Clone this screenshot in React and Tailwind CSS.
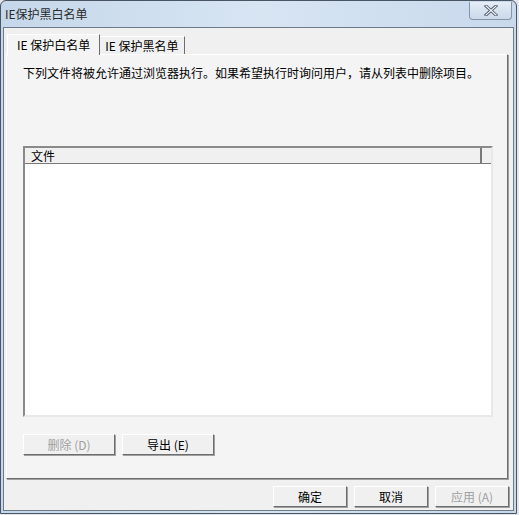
import React from "react";

const font = { fontFamily: '"Noto Sans CJK SC", "Liberation Sans", sans-serif' };

function Btn({ children, disabled, className = "" }) {
  return (
    <button
      type="button"
      className={
        "h-[21px] flex items-center justify-center text-[12px] leading-none bg-[#f0f0f0] border border-t-white border-l-white border-r-[#6d6d6d] border-b-[#6d6d6d] shadow-[1px_1px_0_#a0a0a0] " +
        (disabled ? "text-[#a0a0a0] " : "text-black ") +
        className
      }
    >
      {children}
    </button>
  );
}

export default function App() {
  return (
    <div className="w-[519px] h-[515px] bg-[#e4e6ec] overflow-hidden" style={font}>
      <div className="w-[517px] h-[514px] flex flex-col rounded-t-[6px] border border-[#4a5563] bg-gradient-to-r from-[#c5d7ea] via-[#d7e5f3] to-[#c8d9ec]">
        {/* title bar */}
        <div className="h-[26px] flex items-center justify-between pl-[4px] pr-[4px]">
          <span className="text-[12px] text-[#2a2a2a]">IE保护黑白名单</span>
          <div className="w-[43px] h-[18px] -mt-[6px] rounded-b-[4px] border border-t-0 border-[#8795a8] bg-gradient-to-b from-[#e4edf7] to-[#cbd9ea] flex items-center justify-center">
            <svg width="14" height="11" viewBox="0 0 14 11">
              <path d="M2 1 L12 10 M12 1 L2 10" stroke="#4d5766" strokeWidth="3" strokeLinecap="square" />
              <path d="M2 1 L12 10 M12 1 L2 10" stroke="#f4f7fb" strokeWidth="1.2" strokeLinecap="square" />
            </svg>
          </div>
        </div>

        {/* client area */}
        <div className="flex-1 mx-[2px] mb-[2px] border border-[#6e7a88] bg-[#f0f0f0] flex flex-col px-[2px] pt-[5px]">
          {/* tabs */}
          <div className="flex items-end h-[21px] pl-[1px]">
            <div className="h-[21px] px-[9px] flex items-center text-[12px] text-black bg-[#f4f4f4] border border-b-0 border-t-white border-l-white border-r-[#6d6d6d] relative z-10 -mb-[1px]">
              IE 保护白名单
            </div>
            <div className="h-[18px] px-[5px] flex items-center text-[12px] text-black border border-b-0 border-t-white border-l-0 border-r-[#6d6d6d]">
              IE 保护黑名单
            </div>
          </div>
          <div className="w-[502px] h-[425px] bg-[#f4f4f4] border border-t-white border-l-white border-r-[#6d6d6d] border-b-[#6d6d6d] shadow-[1px_1px_0_#a0a0a0] flex flex-col pl-[16px] pt-[11px]">
            <p className="text-[12px] text-black leading-[14px] whitespace-nowrap">
              下列文件将被允许通过浏览器执行。如果希望执行时询问用户，请从列表中删除项目。
            </p>
            <div className="mt-[66px] w-[470px] h-[271px] bg-white border-2 border-t-[#8a8a8a] border-l-[#8a8a8a] border-r-[#e8e8e8] border-b-[#e8e8e8] flex flex-col">
              <div className="flex h-[16px] bg-[#f0f0f0] border-b border-[#7a7a7a]">
                <div className="w-[457px] h-full flex items-center pl-[6px] text-[12px] text-black border-r-2 border-[#7a7a7a]">
                  文件
                </div>
                <div className="flex-1" />
              </div>
            </div>
            <div className="flex gap-[7px] mt-[17px]">
              <Btn disabled className="w-[92px]">删除 (D)</Btn>
              <Btn className="w-[92px]">导出 (E)</Btn>
            </div>
          </div>
          {/* bottom buttons */}
          <div className="flex justify-end gap-[7px] mt-[7px] pr-[2px]">
            <Btn className="w-[74px]">确定</Btn>
            <Btn className="w-[74px]">取消</Btn>
            <Btn disabled className="w-[74px]">应用 (A)</Btn>
          </div>
        </div>
      </div>
    </div>
  );
}
